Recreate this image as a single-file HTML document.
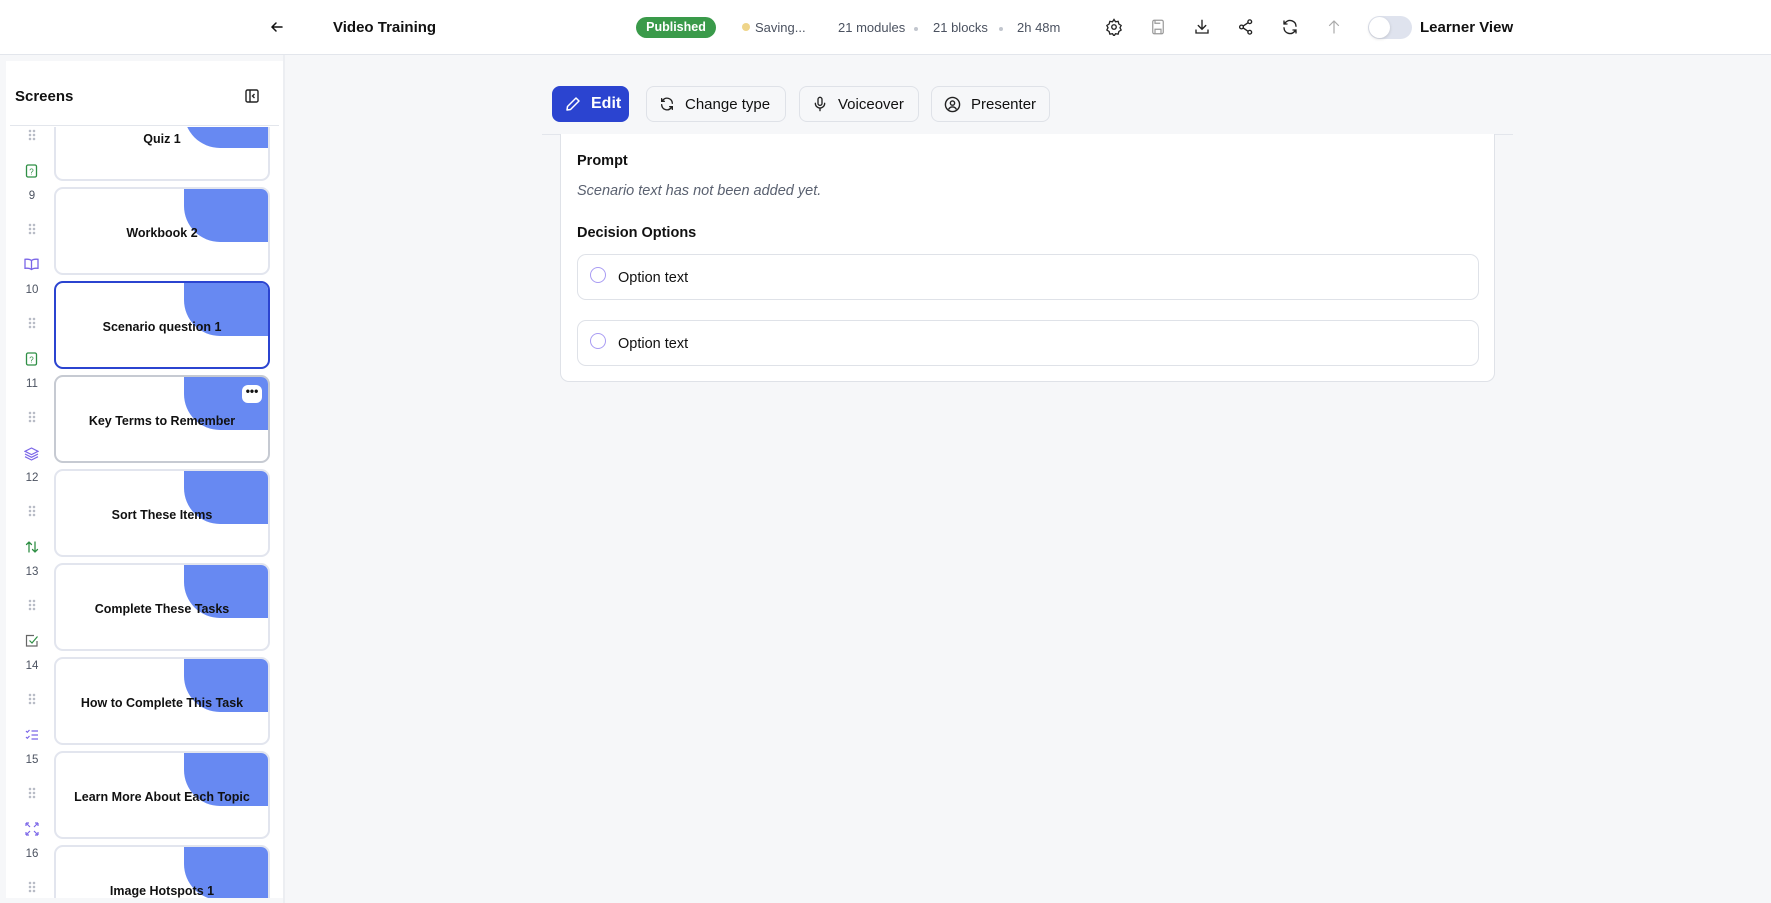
<!DOCTYPE html>
<html><head><meta charset="utf-8"><style>
*{box-sizing:border-box;margin:0;padding:0}
body{width:1771px;height:903px;overflow:hidden;background:#f6f7f9;font-family:"Liberation Sans",Arial,sans-serif;color:#111;position:relative}
.abs{position:absolute}
.top{left:0;top:0;width:1771px;height:55px;background:#fff;border-bottom:1px solid #e3e6ec}
.meta{font-size:13px;color:#4b5260;top:20px}
.dot{width:4px;height:4px;border-radius:50%;background:#c2c6ce;top:27px}
.ic{top:18px;width:18px;height:18px}
.panel{left:6px;top:61px;width:277px;height:837px;background:#fff}
.list{left:0;top:127px;width:290px;height:771px;overflow:hidden}
.card{left:54px;width:216px;height:88px;border:2px solid #e2e5ee;border-radius:9px;background:#fff;overflow:hidden}
.card .blue{position:absolute;right:0;top:0;width:84px;height:53px;background:#6789f2;border-bottom-left-radius:36px}
.card .t{position:absolute;left:0;right:0;top:37px;text-align:center;font-weight:bold;font-size:12.5px;color:#111}
.num{left:20px;width:24px;text-align:center;font-size:11.5px;color:#4b5260}
.drag{left:28px;width:8px;height:12px;background-image:radial-gradient(circle,#b8bcc6 1.2px,transparent 1.4px);background-size:4px 4px}
.btn{top:86px;height:36px;border:1px solid #dfe2e8;border-radius:8px;background:#f6f7f9;font-size:15px;display:flex;align-items:center;gap:10px;padding-left:12px;color:#111}
.opt{left:577px;width:902px;border:1px solid #dfe2e8;border-radius:9px;background:#fff}
.radio{position:absolute;left:12px;width:16px;height:16px;border:1.3px solid #a99cf3;border-radius:50%}
</style></head><body>
<div class="abs top"></div>
<svg class="abs" style="left:269px;top:19px" width="16" height="16" viewBox="0 0 16 16" fill="none" stroke="#111" stroke-width="1.5" stroke-linecap="round"><path d="M13 8H3M7 4L3 8l4 4"/></svg>
<div class="abs" style="left:333px;top:19px;font-size:15px;font-weight:bold">Video Training</div>
<div class="abs" style="left:636px;top:17px;width:80px;height:21px;background:#3a9a4a;border-radius:11px;color:#fff;font-size:12.5px;font-weight:bold;text-align:center;line-height:21px">Published</div>
<div class="abs" style="left:742px;top:23px;width:8px;height:8px;border-radius:50%;background:#efd58a"></div>
<div class="abs meta" style="left:755px">Saving...</div>
<div class="abs meta" style="left:838px">21 modules</div>
<div class="abs dot" style="left:914px"></div>
<div class="abs meta" style="left:933px">21 blocks</div>
<div class="abs dot" style="left:999px"></div>
<div class="abs meta" style="left:1017px">2h 48m</div>
<svg class="abs ic" style="left:1105px" viewBox="0 0 24 24" fill="none" stroke="#222" stroke-width="1.8"><circle cx="12" cy="12" r="3"/><path d="M12 2l2 3 3.5-.5 1 3.5 3 2-1.5 3 1.5 3-3 2-1 3.5-3.5-.5-2 3-2-3-3.5.5-1-3.5-3-2 1.5-3L2.5 10l3-2 1-3.5 3.5.5z"/></svg>
<svg class="abs ic" style="left:1149px" viewBox="0 0 24 24" fill="none" stroke="#999" stroke-width="1.6"><rect x="5" y="3" width="14" height="18" rx="2"/><path d="M8 21v-6h8v6M8 3v4h7"/></svg>
<svg class="abs ic" style="left:1193px" viewBox="0 0 24 24" fill="none" stroke="#222" stroke-width="1.8" stroke-linecap="round"><path d="M12 3v12M7 10l5 5 5-5M4 16v4h16v-4"/></svg>
<svg class="abs ic" style="left:1237px" viewBox="0 0 24 24" fill="none" stroke="#222" stroke-width="1.8"><circle cx="17" cy="5" r="2.5"/><circle cx="6" cy="12" r="2.5"/><circle cx="17" cy="19" r="2.5"/><path d="M8.2 10.8l6.6-4.6M8.2 13.2l6.6 4.6"/></svg>
<svg class="abs ic" style="left:1281px" viewBox="0 0 24 24" fill="none" stroke="#222" stroke-width="1.8" stroke-linecap="round"><path d="M20 11a8 8 0 0 0-14-5l-2 2M4 4v4h4M4 13a8 8 0 0 0 14 5l2-2M20 20v-4h-4"/></svg>
<svg class="abs ic" style="left:1325px" viewBox="0 0 24 24" fill="none" stroke="#aaa" stroke-width="1.6" stroke-linecap="round"><path d="M12 20V4M6 10l6-6 6 6"/></svg>
<div class="abs" style="left:1368px;top:16px;width:44px;height:23px;border-radius:12px;background:#dfe3ee"></div>
<div class="abs" style="left:1369px;top:17px;width:21px;height:21px;border-radius:50%;background:#fff;box-shadow:0 1px 3px rgba(0,0,0,.15)"></div>
<div class="abs" style="left:1420px;top:19px;font-size:15px;font-weight:bold">Learner View</div>

<div class="abs panel"></div>
<div class="abs" style="left:283px;top:55px;width:2px;height:848px;background:#eceef2"></div>
<div class="abs" style="left:15px;top:88px;font-size:15px;font-weight:bold">Screens</div>
<svg class="abs" style="left:244px;top:88px" width="16" height="16" viewBox="0 0 16 16" fill="none" stroke="#222" stroke-width="1.4"><rect x="2" y="2" width="12" height="12" rx="1.5"/><path d="M6 2v12M10.5 6L8.5 8l2 2"/></svg>
<div class="abs" style="left:10px;top:125px;width:269px;height:1px;background:#e3e6ec"></div>

<div class="abs list">
<div class="abs card" style="top:-34px"><div class="blue"></div><div class="t">Quiz 1</div></div>
<div class="abs drag" style="top:2px"></div>
<svg class="abs" style="left:25px;top:37px" width="13" height="14" viewBox="0 0 13 14" fill="none" stroke="#2f8f45" stroke-width="1.3"><rect x="1.5" y="1" width="10" height="12" rx="1.5"/><text x="6.5" y="10.5" font-size="8" text-anchor="middle" fill="#2f8f45" stroke="none" font-family="Liberation Sans">?</text></svg>

<div class="abs num" style="top:63px">9</div><div class="abs drag" style="top:96px"></div>
<div class="abs card" style="top:60px"><div class="blue"></div><div class="t">Workbook 2</div></div>
<svg class="abs" style="left:24px;top:131px" width="15" height="13" viewBox="0 0 15 13" fill="none" stroke="#7b66e8" stroke-width="1.3"><path d="M7.5 2.5C6 1.3 3.5 1 1 1.3v9c2.5-.3 5 0 6.5 1.2 1.5-1.2 4-1.5 6.5-1.2v-9C11.5 1 9 1.3 7.5 2.5zM7.5 2.5v9"/></svg>

<div class="abs num" style="top:157px">10</div><div class="abs drag" style="top:190px"></div>
<div class="abs card" style="top:154px;border-color:#2b44d0"><div class="blue"></div><div class="t">Scenario question 1</div></div>
<svg class="abs" style="left:25px;top:225px" width="13" height="14" viewBox="0 0 13 14" fill="none" stroke="#2f8f45" stroke-width="1.3"><rect x="1.5" y="1" width="10" height="12" rx="1.5"/><text x="6.5" y="10.5" font-size="8" text-anchor="middle" fill="#2f8f45" stroke="none" font-family="Liberation Sans">?</text></svg>

<div class="abs num" style="top:251px">11</div><div class="abs drag" style="top:284px"></div>
<div class="abs card" style="top:248px;border-color:#c6cad2"><div class="blue"></div><div class="t">Key Terms to Remember</div><div style="position:absolute;right:6px;top:8px;width:20px;height:18px;border-radius:6px;background:#fff;font-size:12px;font-weight:bold;text-align:center;line-height:12px">•••</div></div>
<svg class="abs" style="left:24px;top:320px" width="15" height="14" viewBox="0 0 15 14" fill="none" stroke="#7b66e8" stroke-width="1.2"><path d="M7.5 1L14 4.3 7.5 7.6 1 4.3zM1 7l6.5 3.3L14 7M1 9.7L7.5 13 14 9.7"/></svg>

<div class="abs num" style="top:345px">12</div><div class="abs drag" style="top:378px"></div>
<div class="abs card" style="top:342px"><div class="blue"></div><div class="t">Sort These Items</div></div>
<svg class="abs" style="left:25px;top:413px" width="14" height="14" viewBox="0 0 14 14" fill="none" stroke="#2f8f45" stroke-width="1.3" stroke-linecap="round"><path d="M4 12V2M1.5 4.5L4 2l2.5 2.5M10 2v10M7.5 9.5L10 12l2.5-2.5"/></svg>

<div class="abs num" style="top:439px">13</div><div class="abs drag" style="top:472px"></div>
<div class="abs card" style="top:436px"><div class="blue"></div><div class="t">Complete These Tasks</div></div>
<svg class="abs" style="left:25px;top:507px" width="14" height="14" viewBox="0 0 14 14" fill="none" stroke="#2f8f45" stroke-width="1.2"><path d="M12 7v5H1.5V1.5H9" stroke="#666"/><path d="M4.5 6.5L7 9l5.5-6.5"/></svg>

<div class="abs num" style="top:533px">14</div><div class="abs drag" style="top:566px"></div>
<div class="abs card" style="top:530px"><div class="blue"></div><div class="t">How to Complete This Task</div></div>
<svg class="abs" style="left:25px;top:602px" width="14" height="12" viewBox="0 0 14 12" fill="none" stroke="#7b66e8" stroke-width="1.2"><path d="M1 2l1.3 1.3L4.5 1M1 8l1.3 1.3L4.5 7M6.5 2H13M6.5 6H13M6.5 10H13"/></svg>

<div class="abs num" style="top:627px">15</div><div class="abs drag" style="top:660px"></div>
<div class="abs card" style="top:624px"><div class="blue"></div><div class="t">Learn More About Each Topic</div></div>
<svg class="abs" style="left:25px;top:695px" width="14" height="14" viewBox="0 0 14 14" fill="none" stroke="#7b66e8" stroke-width="1.2"><path d="M1 1l4 4M1 1v3M1 1h3M13 1L9 5M13 1v3M13 1h-3M1 13l4-4M1 13v-3M1 13h3M13 13L9 9M13 13v-3M13 13h-3"/></svg>

<div class="abs num" style="top:721px">16</div><div class="abs drag" style="top:754px"></div>
<div class="abs card" style="top:718px"><div class="blue"></div><div class="t">Image Hotspots 1</div></div>
</div>

<div class="abs btn" style="left:552px;width:77px;background:#2b44d0;border-color:#2b44d0;color:#fff;font-weight:bold;font-size:16px">
<svg width="16" height="16" viewBox="0 0 16 16" fill="none" stroke="#fff" stroke-width="1.5" stroke-linejoin="round"><path d="M11 2l3 3-8.5 8.5L2 14l.5-3.5z"/></svg>Edit</div>
<div class="abs btn" style="left:646px;width:140px"><svg width="16" height="16" viewBox="0 0 24 24" fill="none" stroke="#222" stroke-width="2" stroke-linecap="round"><path d="M20 11a8 8 0 0 0-14-5l-2 2M4 4v4h4M4 13a8 8 0 0 0 14 5l2-2M20 20v-4h-4"/></svg>Change type</div>
<div class="abs btn" style="left:799px;width:120px"><svg width="16" height="16" viewBox="0 0 24 24" fill="none" stroke="#222" stroke-width="2" stroke-linecap="round"><rect x="9" y="2" width="6" height="12" rx="3"/><path d="M5 11a7 7 0 0 0 14 0M12 18v4"/></svg>Voiceover</div>
<div class="abs btn" style="left:931px;width:119px"><svg width="17" height="17" viewBox="0 0 24 24" fill="none" stroke="#222" stroke-width="2"><circle cx="12" cy="12" r="10"/><circle cx="12" cy="10" r="3"/><path d="M6.5 19a6 6 0 0 1 11 0"/></svg>Presenter</div>
<div class="abs" style="left:542px;top:134px;width:971px;height:1px;background:#e3e6ec"></div>

<div class="abs" style="left:560px;top:134px;width:935px;height:248px;background:#fff;border:1px solid #dfe2e8;border-top:none;border-radius:0 0 9px 9px"></div>
<div class="abs" style="left:577px;top:153px;font-size:14.5px;font-weight:600">Prompt</div>
<div class="abs" style="left:577px;top:183px;font-size:14.5px;font-style:italic;color:#5a6170">Scenario text has not been added yet.</div>
<div class="abs" style="left:577px;top:225px;font-size:14.5px;font-weight:600">Decision Options</div>
<div class="abs opt" style="top:254px;height:46px"><div class="radio" style="top:12px"></div><div style="position:absolute;left:40px;top:15px;font-size:14.5px">Option text</div></div>
<div class="abs opt" style="top:320px;height:46px"><div class="radio" style="top:12px"></div><div style="position:absolute;left:40px;top:15px;font-size:14.5px">Option text</div></div>
</body></html>
